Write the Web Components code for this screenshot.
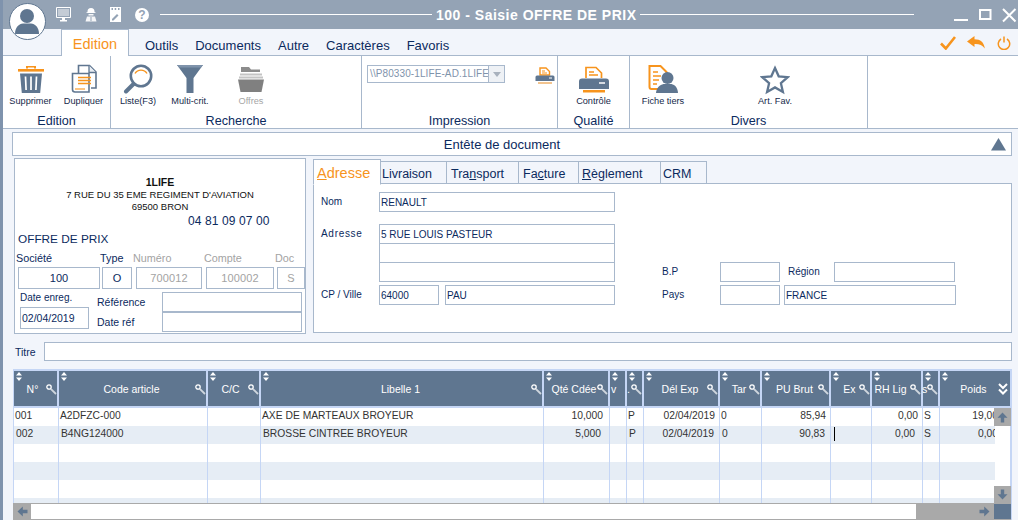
<!DOCTYPE html>
<html lang="fr"><head><meta charset="utf-8"><title>Saisie OFFRE DE PRIX</title>
<style>
html,body{margin:0;padding:0;background:#f2f5fb;font-family:"Liberation Sans",Arial,sans-serif;color:#0b2a5e}
svg{display:block}
u{text-underline-offset:1px}
</style></head><body>
<erp-window>
  <erp-titlebar slot="top" heading="100 - Saisie OFFRE DE PRIX"></erp-titlebar>
  <erp-menubar slot="top"></erp-menubar>
  <erp-ribbon slot="top">
    <ribbon-group label="Edition" style="width:108px">
      <ribbon-btn style="width:53px;margin-left:1px"><svg slot="icon" width="28" height="30" viewBox="0 0 28 30"><path d="M1 5h26v2.600H1z" fill="#f7941d"/><path d="M9 4.500V2h10v2.500h-2V3.500h-6v1z" fill="#f7941d"/><path d="M3 9.500h22L23.200 29H4.800z" fill="#5f7690"/><path d="M8.500 12.500l.6 13.500M14 12.500V26M19.500 12.500L18.900 26" stroke="#fff" stroke-width="1.700" fill="none"/></svg>Supprimer</ribbon-btn>
      <ribbon-btn style="width:53px"><svg slot="icon" width="28" height="30" viewBox="0 0 28 30"><path d="M8.500 9.500V1.500h11l6.500 6.500V24h-5" fill="#fff" stroke="#5f7690" stroke-width="1.600"/><path d="M19 1.500V8.500h7" fill="#e9eef4" stroke="#5f7690" stroke-width="1.300"/><path d="M2.500 9.500h16.500v18.500H5a2.500 2.500 0 0 1-2.500-2.500z" fill="#fff" stroke="#5f7690" stroke-width="1.600"/><path d="M8 13.500h13M8 16.500h13M8 19.500h13" stroke="#f7941d" stroke-width="1.400"/><path d="M5 25h10" stroke="#f7941d" stroke-width="1.100"/></svg>Dupliquer</ribbon-btn>
    </ribbon-group>
    <ribbon-group label="Recherche" style="width:251px">
      <ribbon-btn style="width:54px"><svg slot="icon" width="30" height="30" viewBox="0 0 30 30"><circle cx="18" cy="12" r="10.200" fill="#fff" stroke="#5f7690" stroke-width="2.600"/><path d="M12 9.500a7 7 0 0 1 12 0" fill="none" stroke="#f7941d" stroke-width="1.400"/><path d="M10.500 20L3 27.500" stroke="#5f7690" stroke-width="4" stroke-linecap="round"/></svg>Liste(F3)</ribbon-btn>
      <ribbon-btn style="width:50px"><svg slot="icon" width="28" height="30" viewBox="0 0 28 30"><path d="M1 1h26L17.500 14V29h-7V14z" fill="#5f7690"/><path d="M1 1h26l-2 2.500H3z" fill="#7f93ab"/></svg>Multi-crit.</ribbon-btn>
      <ribbon-btn disabled style="width:72px"><svg slot="icon" width="28" height="30" viewBox="0 0 28 30"><path d="M4 8V3h8l2 2.500h9V8z" fill="#8c8c8c"/><path d="M3 9.500h22v2H3zM2 12.500h24v2H2z" fill="#c4c4c4"/><path d="M1 15.500h26l-2.500 12.500H3.500z" fill="#808080"/></svg>Offres</ribbon-btn>
    </ribbon-group>
    <ribbon-group label="Impression" style="width:196px">
      <print-select>\\P80330-1LIFE-AD.1LIFE</print-select>
      <svg style="margin:11px 0 0 30px" width="20" height="18" viewBox="0 0 20 18"><path d="M5 8V1h6l3.500 3.500V8z" fill="#fff" stroke="#f7941d" stroke-width="1.400"/><path d="M7 4h3M7 6h5" stroke="#f7941d"/><path d="M2 8.500h16a1.500 1.500 0 0 1 1.500 1.500v4H.500v-4A1.500 1.500 0 0 1 2 8.500z" fill="#5f7690"/><path d="M14 11h3" stroke="#fff"/><path d="M3 15h14v2H3z" fill="#f2c48f"/></svg>
    </ribbon-group>
    <ribbon-group label="Qualité" style="width:72px">
      <ribbon-btn style="width:71px"><svg slot="icon" width="30" height="30" viewBox="0 0 30 30"><path d="M7 14V3.500h10l5.500 5.500V14" fill="#fff" stroke="#f7941d" stroke-width="1.700"/><path d="M10 8h5M10 11h9" stroke="#f7941d" stroke-width="1.300"/><path d="M3 14.500h24a3 3 0 0 1 3 3V25H0v-7.500a3 3 0 0 1 3-3z" fill="#5f7690"/><path d="M20 19h6" stroke="#fff" stroke-width="1.500"/><path d="M4 26h22v2.500H4z" fill="#f7941d"/></svg>Contrôle</ribbon-btn>
    </ribbon-group>
    <ribbon-group label="Divers" style="width:238px">
      <ribbon-btn style="width:66px"><svg slot="icon" width="30" height="30" viewBox="0 0 30 30"><path d="M13 25H3.500A2 2 0 0 1 1.500 23V2h11l6 6v4" fill="#fff" stroke="#f7941d" stroke-width="2"/><path d="M5 8h5M5 12h8M5 16h6M5 20h4" stroke="#f7941d" stroke-width="1.400"/><circle cx="19.500" cy="14" r="6" fill="#5f7690"/><path d="M8 29c.4-5.500 4-8 7.500-9h8c3.500 1 6.100 3.500 6.500 9z" fill="#5f7690"/></svg>Fiche tiers</ribbon-btn>
      <ribbon-btn style="width:60px;margin-left:49px"><svg slot="icon" style="margin-top:1px" width="30" height="30" viewBox="0 0 30 30"><path d="M15 3l3.700 8.300 9 .9-6.800 6 2 8.800L15 22.400 7.100 27l2-8.800-6.800-6 9-.9z" fill="none" stroke="#5f7690" stroke-width="2.300" stroke-linejoin="miter"/></svg>Art. Fav.</ribbon-btn>
    </ribbon-group>
  </erp-ribbon>

  <doc-bar>Entête de document</doc-bar>
  <form-row>
    <company-panel></company-panel>
    <address-panel></address-panel>
  </form-row>
  <title-row></title-row>
  <data-grid></data-grid>
</erp-window>

<script>
function tpl(html){const t=document.createElement('template');t.innerHTML=html;return t;}
function comp(name,html,extra){
  const t=tpl(html);
  class C extends HTMLElement{
    constructor(){super();this.attachShadow({mode:'open'}).appendChild(t.content.cloneNode(true));}
    connectedCallback(){if(extra)extra(this);}
  }
  customElements.define(name,C);
}
const FONT='font-family:"Liberation Sans",Arial,sans-serif;';

comp('erp-window',`<style>
:host{display:flex;flex-direction:column;position:relative;width:1018px;height:520px;overflow:hidden;box-sizing:border-box;border-left:3px solid #7f93ad;background:#f2f5fb;${FONT}}
.avatar{position:absolute;left:6px;top:3px;width:37px;height:37px;box-sizing:border-box;border-radius:50%;background:#fff;border:1.500px solid #5f7690;overflow:hidden;z-index:5}
.strip{position:absolute;left:-3px;top:0;width:3px;height:29px;background:#94a3b5}
</style><div class="strip"></div><div class="avatar"><svg width="34" height="34" viewBox="0 0 34 34"><circle cx="17" cy="12" r="7" fill="#5f7690"/><path d="M5 30c0-7 4-10 8-10.500h8C25 20 29 23 29 30z" fill="#5f7690"/></svg></div><slot name="top"></slot><slot></slot>`);

comp('erp-titlebar',`<style>
:host{display:flex;align-items:center;height:29px;background:#94a3b5;color:#fff;margin-left:-3px;flex:none;position:relative}
.tools{display:flex;align-items:center;margin-left:56px;width:104px;flex:none}
.line{height:1px;background:#fff;flex:none;margin-top:0}
h1{margin:0 4px;font:bold 14px "Liberation Sans",Arial,sans-serif;white-space:nowrap;flex:none;width:200px;text-align:center;letter-spacing:.5px}
.help{width:14px;height:14px;border-radius:50%;background:#fff;color:#94a3b5;font:bold 12px/14px "Liberation Sans",Arial,sans-serif;text-align:center;margin-left:14px}
.win{display:flex;align-items:flex-start;margin-left:40px;height:29px;flex:none}
</style>
<div class="tools">
<svg width="15" height="15" viewBox="0 0 15 15"><path d="M.5 .5h14v10H.5z" fill="none" stroke="#fff"/><path d="M2 2h11v7H2z" fill="#fff" opacity=".45"/><path d="M6 11h3v2h2v1.500H4V13h2z" fill="#fff"/></svg>
<svg style="margin-left:13px" width="14" height="15" viewBox="0 0 14 15"><path d="M3.500 4.500a3.500 3.500 0 0 1 7 0v.7h1v.8h-9v-.8h1z" fill="#fff"/><path d="M4.500 7h5v1.500h-5zM3 9.500h8l1.500 5H1.500z" fill="#fff" opacity=".9"/><path d="M6.500 10h1v4h-1z" fill="#94a3b5"/></svg>
<svg style="margin-left:12px" width="11" height="15" viewBox="0 0 11 15"><path d="M0 0h11v15H0z" fill="#fff"/><path d="M1.500 1h1.500v2H1.500zM4.700 1h1.500v2H4.700zM8 1h1.500v2H8z" fill="#94a3b5"/><path d="M2 12l5-5 1.500 1.500-5 5H2z" fill="#94a3b5"/></svg>
<div class="help">?</div>
</div>
<div class="line" style="width:272px"></div>
<h1></h1>
<div class="line" style="width:274px"></div>
<div class="win">
<svg width="66" height="29" viewBox="0 0 66 29"><path d="M0 19h14v2H0z" fill="#fff"/><path d="M26 10h10.500v9H26z" fill="none" stroke="#fff" stroke-width="2"/><path d="M49 9l12.500 12.500M61.500 9L49 21.500" stroke="#fff" stroke-width="2"/></svg>
</div>`,el=>{el.shadowRoot.querySelector('h1').textContent=el.getAttribute('heading');});

comp('erp-menubar',`<style>
:host{display:flex;height:26px;flex:none;color:#0b2a5e;font-size:13px;position:relative;z-index:2}
.tab{margin-left:58px;width:68px;height:27px;box-sizing:border-box;background:#fff;border:1px solid #a8b8cc;border-bottom:none;color:#f7941d;font-size:14.500px;text-align:center;line-height:29px}
nav{display:flex;gap:17px;margin-left:16px;line-height:34px}
nav span{white-space:nowrap}
.act{margin-left:auto;margin-right:7px;display:flex;align-items:center;gap:11px;padding-top:1px}
</style>
<div class="tab">Edition</div>
<nav><span>Outils</span><span>Documents</span><span>Autre</span><span>Caractères</span><span>Favoris</span></nav>
<div class="act">
<svg width="16" height="14" viewBox="0 0 16 14"><path d="M1 7.500L5.800 12.500 15 1" fill="none" stroke="#f7941d" stroke-width="2.600"/></svg>
<svg width="18" height="13" viewBox="0 0 18 13"><path d="M0 5.500L7.500 0v3.300c6 0 9.500 3 10.300 9.200C15.500 9 12 7.800 7.500 8v3z" fill="#f7941d"/></svg>
<svg style="margin-left:1px" width="14" height="14" viewBox="0 0 14 14"><path d="M4 3a5.700 5.700 0 1 0 6 0" fill="none" stroke="#f7941d" stroke-width="1.500"/><path d="M7 .5v6" stroke="#f7941d" stroke-width="1.500"/></svg>
</div>`);

comp('erp-ribbon',`<style>
:host{display:flex;height:74px;box-sizing:border-box;flex:none;background:#fff;border-top:1px solid #a8b8cc;border-bottom:1px solid #a8b8cc}
</style><slot></slot>`);

comp('ribbon-group',`<style>
:host{display:flex;flex-direction:column;box-sizing:border-box;flex:none;height:72px;border-right:1px solid #a8b8cc}
.body{display:flex;flex:1;align-items:flex-start;min-height:0}
.lab{height:13px;line-height:13px;text-align:center;font-size:12.600px;color:#0b2a5e;flex:none}
</style><div class="body"><slot></slot></div><div class="lab"></div>`,el=>{el.shadowRoot.querySelector('.lab').textContent=el.getAttribute('label');});

comp('ribbon-btn',`<style>
:host{display:flex;flex-direction:column;align-items:center;box-sizing:border-box;flex:none;padding-top:8px;font-size:9.200px;color:#16294a;white-space:nowrap}
:host([disabled]){color:#a6a6a6}
.ic{height:30px;display:flex;align-items:flex-start;justify-content:center}
.t{line-height:12px;margin-top:1px}
</style><div class="ic"><slot name="icon"></slot></div><div class="t"><slot></slot></div>`);

comp('print-select',`<style>
:host{display:flex;box-sizing:border-box;margin:9px 0 0 5px;width:138px;height:18px;border:1px solid #a8b8cc;background:#fff;font-size:10px;color:#7f93ab;flex:none}
.t{flex:1;overflow:hidden;white-space:nowrap;line-height:16px;padding-left:2px;letter-spacing:.1px}
.b{width:15px;border-left:1px solid #a8b8cc;background:#eef1f5;flex:none;display:flex;align-items:center;justify-content:center}
.b i{border:4px solid transparent;border-top:5px solid #a8b1bd;border-bottom:0}
</style><div class="t"><slot></slot></div><div class="b"><i></i></div>`);

comp('doc-bar',`<style>
:host{display:flex;align-items:center;justify-content:center;position:relative;box-sizing:border-box;flex:none;height:24px;margin:3px 6px 0 9px;background:#fff;border:1px solid #a8b8cc;font-size:13px;color:#0b2a5e;padding-right:20px;padding-top:1px}
svg{position:absolute;right:5px;top:5px}
</style><slot></slot><svg width="15" height="13" viewBox="0 0 15 13"><path d="M7.500 0L15 12.500H0z" fill="#5f7690"/></svg>`);

comp('form-row',`<style>
:host{display:flex;flex:none;height:177px;margin:2px 6px 0 11px;gap:7px;align-items:flex-start}
</style><slot></slot>`);

comp('field-box',`<style>
:host{display:flex;align-items:center;box-sizing:border-box;height:20px;background:#fff;border:1px solid #a8b8cc;font-size:10px;color:#0b2a5e;padding:0 1px;white-space:nowrap;overflow:hidden;flex:none}
:host([center]){justify-content:center;font-size:11px;letter-spacing:.1px}
:host([off]){color:#a3a3a3}
</style><slot></slot>`);

comp('company-panel',`<style>
:host{display:block;box-sizing:border-box;width:292px;height:176px;background:#fff;border:1px solid #a8b8cc;color:#0b2a5e;font-size:10px;white-space:nowrap}
.hd{padding-top:17px;text-align:center;color:#111;line-height:12px;font-size:9.500px}
.hd b{display:block;font-size:10.500px;margin-bottom:1px}
.ph{margin:0 0 0 173px;font-size:12px;line-height:16px;letter-spacing:.1px;color:#0b2a5e}
.of{margin:3px 0 0 3px;font-size:11.800px;line-height:15px}
.cols{display:grid;grid-template-columns:84px 33px 71px 71px 31px;margin:5px 0 0 1px;width:290px}
.cols label{font-size:10.800px;line-height:12px;height:15px;display:block}
.cols .off{color:#a3a3a3}
.cols field-box{height:22px}
.b{display:flex;margin-top:3px}
.d{width:77px;margin-left:5px}
.d label{display:block;line-height:12px;height:15px;font-size:10px}
.d field-box{height:22px;width:69px;font-size:10.500px}
.r{width:65px;padding-top:1px;font-size:10.500px}
.r div{height:20px;line-height:18px}
.v{width:140px}
</style>
<div class="hd"><b>1LIFE</b>7 RUE DU 35 EME REGIMENT D'AVIATION<br>69500 BRON</div>
<div class="ph">04 81 09 07 00</div>
<div class="of">OFFRE DE PRIX</div>
<div class="cols">
 <div><label>Société</label><field-box center style="margin-left:2px;width:82px">100</field-box></div>
 <div><label>Type</label><field-box center style="margin-left:2px;width:30px">O</field-box></div>
 <div><label class="off">Numéro</label><field-box center off style="margin-left:3px;width:66px">700012</field-box></div>
 <div><label class="off">Compte</label><field-box center off style="margin-left:2px;width:68px">100002</field-box></div>
 <div><label class="off">Doc</label><field-box center off style="margin-left:2px;width:28px">S</field-box></div>
</div>
<div class="b">
 <div class="d"><label>Date enreg.</label><field-box>02/04/2019</field-box></div>
 <div class="r"><div>Référence</div><div>Date réf</div></div>
 <div class="v"><field-box></field-box><field-box></field-box></div>
</div>`);

comp('address-panel',`<style>
:host{display:block;width:699px;color:#0b2a5e;font-size:10px;white-space:nowrap}
.tabs{display:flex;height:26px;align-items:flex-end;position:relative;z-index:1;font-size:12.500px}
.tab{box-sizing:border-box;height:23px;border:1px solid #a8b8cc;border-left:none;padding-left:3px;line-height:25px;background:#f2f5fb;overflow:hidden}
.tab.on{height:26px;width:68px;background:#fff;border-left:1px solid #a8b8cc;border-bottom:1px solid #fff;color:#f7941d;font-size:14.500px;line-height:27px;padding-left:3px;margin-bottom:-1px}
.body{box-sizing:border-box;height:150px;margin-top:-1px;background:#fff;border:1px solid #a8b8cc;display:flex;padding-top:8px}
.L{width:301px;flex:none;padding-left:7px}
.row{display:flex}
.row>span{width:58px;flex:none;line-height:19px}
.g{width:236px;flex:none}
.R{padding-top:70px;margin-left:40px}
.R .row>span{width:58px}
</style>
<div class="tabs">
 <div class="tab on"><u>A</u>dresse</div>
 <div class="tab" style="width:66px;padding-left:1px">Livraison</div>
 <div class="tab" style="width:72px;padding-left:4px">Tra<u>n</u>sport</div>
 <div class="tab" style="width:60px;padding-left:4px">Fa<u>c</u>ture</div>
 <div class="tab" style="width:82px"><u>R</u>èglement</div>
 <div class="tab" style="width:46px;padding-left:2px">CRM</div>
</div>
<div class="body">
 <div class="L">
  <div class="row"><span>Nom</span><field-box style="width:236px">RENAULT</field-box></div>
  <div class="row" style="margin-top:12px"><span style="letter-spacing:.7px">Adresse</span><div class="g"><field-box>5 RUE LOUIS PASTEUR</field-box><field-box style="margin-top:-1px"></field-box><field-box style="margin-top:-1px"></field-box></div></div>
  <div class="row" style="margin-top:3px"><span style="line-height:20px">CP / Ville</span><field-box style="width:60px">64000</field-box><field-box style="width:170px;margin-left:6px">PAU</field-box></div>
 </div>
 <div class="R">
  <div class="row"><span>B.P</span><field-box style="width:60px"></field-box><span style="width:46px;margin-left:8px">Région</span><field-box style="width:121px"></field-box></div>
  <div class="row" style="margin-top:3px"><span style="line-height:20px">Pays</span><field-box style="width:60px"></field-box><field-box style="width:172px;margin-left:4px">FRANCE</field-box></div>
 </div>
</div>`);

comp('title-row',`<style>
:host{display:flex;align-items:center;flex:none;height:19px;margin:7px 6px 0 12px;font-size:10.500px;color:#0b2a5e}
span{width:29px;flex:none}
div{flex:1;height:19px;box-sizing:border-box;background:#fff;border:1px solid #a8b8cc}
</style><span>Titre</span><div></div>`);

/* ---- grille ---- */
const COLS=[45,149,53,283,66,17,17,76,42,69,41,51,17,55];
const TPL=COLS.map(w=>w+'px').join(' ');
const KEY='<svg class="k" width="11" height="11" viewBox="0 0 11 11"><circle cx="3" cy="3" r="2.200" fill="none" stroke="#fff" stroke-width="1.300"/><path d="M4.800 4.800L10 10" stroke="#cfd6de" stroke-width="1.800"/></svg>';
const SORT='<svg class="s" width="6" height="9" viewBox="0 0 6 9"><path d="M3 0l3 3.500H0zM3 9L0 5.500h6z" fill="#fff"/></svg>';
const HEAD=[['N°',1,-3],['Code article',1,-1],['C/C',1,-3],['Libelle 1',1,-1],['Qté Cdée',1,-2],['v',0,-4],['.',1,-6],['Dél Exp',1,-1],['Tar',1,-1],['PU Brut',1,-1],['Ex',1,-1],['RH Lig',1,-6],['s',1,-6],['Poids',0,6]];
const ROWS=[
 [['001'],['A2DFZC-000'],[''],['AXE DE MARTEAUX BROYEUR'],['10,000','r',6],[''],['P'],['02/04/2019','r',4],['0'],['85,94','r',4],[''],['0,00','r',4],['S'],['19,00','r',-3]],
 [['002',,,1],['B4NG124000',,,1],[''],['BROSSE CINTREE BROYEUR',,,1],['5,000','r',8],[''],['P',,,1],['02/04/2019','r',5],['0',,,1],['90,83','r',5],['','c'],['0,00','r',7],['S'],['0,00','r',-3]],
 [],[],[],[]
];
const arrow=r=>`<svg style="transform:rotate(${r}deg)" width="11" height="11" viewBox="0 0 11 11"><path d="M5.500 .5L10.500 5.800H7.200V10.500H3.800V5.800H.5z" fill="#5f7690"/></svg>`;
comp('data-grid',`<style>
:host{display:block;flex:none;box-sizing:border-box;width:999px;height:151px;margin:8px 0 0 10px;background:#fff;border:solid #c5d6f5;border-width:2px 2px 0 1px;font-size:10.300px;color:#333;position:relative}
.main{display:grid;grid-template-columns:981px 15px}
.hd{display:grid;grid-template-columns:${TPL};height:37px;background:#5f7690;border-bottom:2px solid #c5d6f5;box-sizing:border-box;color:#fff;font-size:10.500px}
.hc{position:relative;display:flex;align-items:center;justify-content:center;border-right:2px solid #c5d6f5;box-sizing:border-box;white-space:nowrap;overflow:visible;padding-top:1px}
.hc:last-child{border-right:none}
.s{position:absolute;left:2px;top:1px}
.k{position:absolute;right:0;top:13px}
.tr{display:grid;grid-template-columns:${TPL};height:18px;overflow:hidden}
.tr.alt{background:#e6edf5}
.td{display:flex;align-items:center;min-width:0;overflow:hidden;border-right:1px solid #c5d6f5;white-space:nowrap;line-height:14px;box-sizing:border-box;padding:0 0 3px 1px}
.td:last-child{border-right:none}
.td.r{justify-content:flex-end}
.caret{width:1px;height:14px;background:#000;margin-left:2px}
.tb{height:95px;overflow:hidden}
.sb{display:flex;flex-direction:column;background:#fff}
.top{height:37px;background:#5f7690;display:flex;align-items:center;justify-content:center;flex:none;border-bottom:2px solid #c5d6f5;box-sizing:border-box}
.btn{background:#a9a9a9;display:flex;align-items:center;justify-content:center;flex:none;margin:0 -1px}
.sp{flex:1}
.hs{display:flex;height:17px;border-top:1px solid #a9a9a9;border-bottom:1px solid #a9a9a9;box-sizing:border-box;margin-left:-1px;width:998px}
.hs .l{width:18px;background:#a9a9a9;display:flex;align-items:center;justify-content:center}
.hs .m{flex:1;background:#fff}
.hs .t{width:78px;background:#a9a9a9;display:flex;align-items:center;justify-content:flex-end;padding-right:4px;box-sizing:border-box}
.hs .c{width:17px;background:#5f7690}
</style><div class="main"><div id="left"></div><div class="sb" id="sb"></div></div><div class="hs" id="hs"></div>`,el=>{
  const r=el.shadowRoot;
  let h='<div class="hd">'+HEAD.map(([t,k,o])=>`<div class="hc">${SORT}<span style="position:relative;left:${o}px">${t}</span>${k?KEY:''}</div>`).join('')+'</div><div class="tb">';
  ROWS.forEach((row,i)=>{
    h+=`<div class="tr${i%2?' alt':''}">`;
    COLS.forEach((w,j)=>{
      const c=row[j]||[''];
      const caret=c[1]==='c'?'<i class="caret"></i>':'';
      const right=c[1]==='r'?`margin-right:${c[2]}px;`:'';
      const left=c[3]?'margin-left:1px;':'';
      h+=`<div class="td${c[1]==='r'?' r':''}">${caret}<span style="${right}${left}flex:none">${c[0]}</span></div>`;
    });
    h+='</div>';
  });
  r.getElementById('left').innerHTML=h+'</div>';
  r.getElementById('sb').innerHTML=`<div class="top"><svg width="10" height="12" viewBox="0 0 10 12"><path d="M1 1l4 4 4-4M1 6.500l4 4 4-4" fill="none" stroke="#fff" stroke-width="2"/></svg></div><div class="btn" style="height:18px">${arrow(0)}</div><div class="sp"></div><div class="btn" style="height:17px">${arrow(180)}</div>`;
  r.getElementById('hs').innerHTML=`<div class="l">${arrow(-90)}</div><div class="m"></div><div class="t">${arrow(90)}</div><div class="c"></div>`;
});
</script>
</body></html>
